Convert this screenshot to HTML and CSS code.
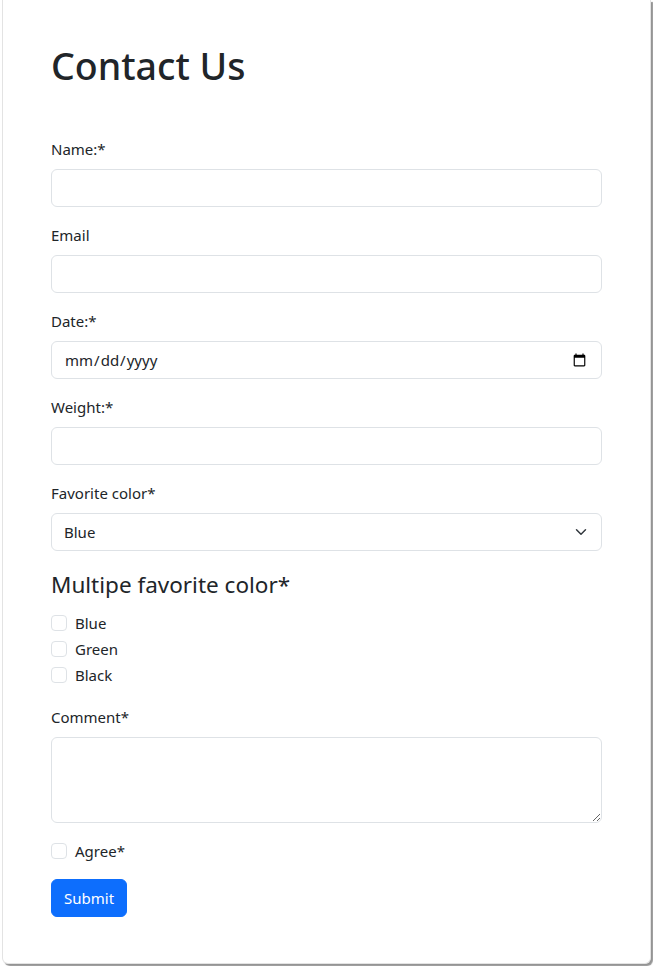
FILE: index.html
```html
<!DOCTYPE html>
<html lang="en">
<head>
<meta charset="utf-8">
<title>Contact Us</title>
<link rel="stylesheet" href="styles.css">
</head>
<body>
<div class="page">
  <main class="card">
    <h1 class="title">Contact Us</h1>
    <form class="form">
      <div class="group">
        <label class="label" for="name">Name:*</label>
        <input class="control" id="name" type="text">
      </div>
      <div class="group">
        <label class="label" for="email">Email</label>
        <input class="control" id="email" type="email">
      </div>
      <div class="group">
        <label class="label" for="date">Date:*</label>
        <input class="control" id="date" type="date">
      </div>
      <div class="group">
        <label class="label" for="weight">Weight:*</label>
        <input class="control" id="weight" type="number">
      </div>
      <div class="group">
        <label class="label" for="color">Favorite color*</label>
        <select class="control select" id="color">
          <option>Blue</option>
          <option>Green</option>
          <option>Black</option>
        </select>
      </div>
      <fieldset class="group fieldset">
        <legend class="legend">Multipe favorite color*</legend>
        <div class="check">
          <input class="check-input" type="checkbox" id="c1">
          <label class="check-label" for="c1">Blue</label>
        </div>
        <div class="check">
          <input class="check-input" type="checkbox" id="c2">
          <label class="check-label" for="c2">Green</label>
        </div>
        <div class="check">
          <input class="check-input" type="checkbox" id="c3">
          <label class="check-label" for="c3">Black</label>
        </div>
      </fieldset>
      <div class="group">
        <label class="label" for="comment">Comment*</label>
        <textarea class="control textarea" id="comment" rows="3"></textarea>
      </div>
      <div class="group">
        <div class="check">
          <input class="check-input" type="checkbox" id="agree">
          <label class="check-label" for="agree">Agree*</label>
        </div>
      </div>
      <button class="btn" type="submit">Submit</button>
    </form>
  </main>
</div>
</body>
</html>
```

FILE: styles.css
```css
* { box-sizing: border-box; }

html, body {
  margin: 0;
  background: #ffffff;
}

body {
  font-family: "Noto Sans", "Open Sans", sans-serif;
  font-size: 15px;
  line-height: 24px;
  color: #212529;
}

.page {
  padding: 0 2px 2px 2px;
  overflow: hidden;
  height: 966px;
}

.card {
  background: #fff;
  border: 1px solid #e3e3e3;
  border-top: 0;
  border-radius: 0 0 6px 6px;
  box-shadow: 2px 2px 1px rgba(0, 0, 0, 0.42);
  padding: 41px 48px 46px 48px;
}

.title {
  margin: 0 0 48px 0;
  font-size: 37.5px;
  line-height: 48px;
  font-weight: 500;
  padding-top: 1px;
  height: 48px;
}

.form {
  margin: 0;
}

.group {
  margin: 0 0 16px 0;
}

.label {
  display: inline-block;
  margin-bottom: 8px;
}

.control {
  display: block;
  width: 100%;
  height: 38px;
  padding: 6px 12px;
  font-family: inherit;
  font-size: 15px;
  line-height: 24px;
  color: #212529;
  background-color: #fff;
  border: 1px solid #dee2e6;
  border-radius: 6px;
  outline: none;
}

.select {
  appearance: none;
  -webkit-appearance: none;
  padding-right: 36px;
  background-image: url("data:image/svg+xml,%3csvg xmlns='http://www.w3.org/2000/svg' viewBox='0 0 16 16'%3e%3cpath fill='none' stroke='%23343a40' stroke-linecap='round' stroke-linejoin='round' stroke-width='2' d='m2 5 6 6 6-6'/%3e%3c/svg%3e");
  background-repeat: no-repeat;
  background-position: right 12px center;
  background-size: 16px 12px;
}

.textarea {
  height: 86px;
  resize: vertical;
}

.fieldset {
  border: 0;
  padding: 0;
  margin: 0 0 16px 0;
  min-width: 0;
}

.legend {
  padding: 0;
  margin-bottom: 8px;
  font-size: 22.5px;
  line-height: 36px;
  float: left;
  width: 100%;
}

.legend + * {
  clear: left;
}

.check {
  display: block;
  min-height: 24px;
  padding-left: 24px;
  margin-bottom: 2px;
}

.check-input {
  appearance: none;
  -webkit-appearance: none;
  float: left;
  width: 16px;
  height: 16px;
  margin: 4px 0 0 -24px;
  background: #fff;
  border: 1px solid #dee2e6;
  border-radius: 4px;
  vertical-align: top;
}

.check-label {
  display: inline-block;
}

.btn {
  display: inline-block;
  padding: 6px 12px;
  font-family: inherit;
  font-size: 15px;
  line-height: 24px;
  color: #fff;
  background-color: #0d6efd;
  border: 1px solid #0d6efd;
  border-radius: 6px;
  cursor: pointer;
}
```
